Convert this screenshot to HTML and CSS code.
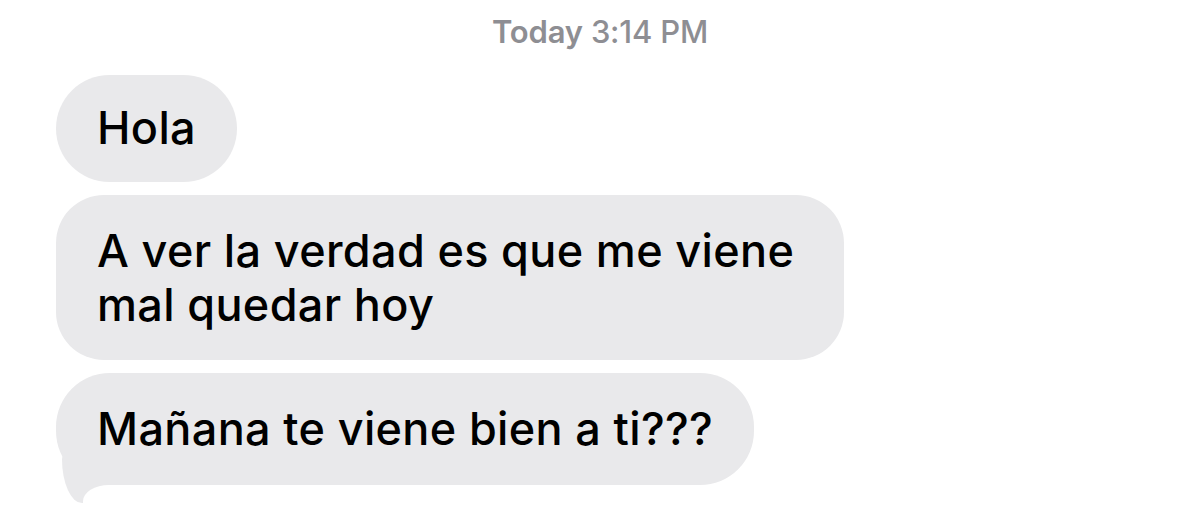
FILE: index.html
```html
<!DOCTYPE html>
<html>
	<head>
		<meta charset="utf-8">
		<title>Mensajes</title>
		<link rel="stylesheet" href="styles.css">
	</head>
	<body>
		<div class="chat">
			<div class="timestamp"><b>Today</b> 3:14 PM</div>
			<div class="messages">
				<div class="bubble">Hola</div>
				<div class="bubble double">A ver la verdad es que me viene<br>mal quedar hoy</div>
				<div class="bubble last">Mañana te viene bien a ti???</div>
			</div>
		</div>
	</body>
</html>
```

FILE: styles.css
```css
* {
	margin: 0;
	padding: 0;
}
body {
	background: #fff;
	font-family: "Inter", "Roboto", sans-serif;
}
.chat {
	padding-top: 14px;
}
.timestamp {
	text-align: center;
	font-size: 31px;
	line-height: 36px;
	color: #8e8e93;
	font-weight: 500;
	letter-spacing: -0.2px;
}
.timestamp b {
	font-weight: 600;
}
.messages {
	display: flex;
	flex-direction: column;
	align-items: flex-start;
	gap: 13px;
	padding: 25px 0 40px 56px;
}
.bubble {
	position: relative;
	background: #e9e9eb;
	color: #000;
	font-size: 45px;
	font-weight: 500;
	line-height: 54px;
	letter-spacing: 0.35px;
	padding: 26px 41px 27px;
	border-radius: 54px;
	white-space: nowrap;
}
.bubble.double {
	padding: 29px 50px 28px 41px;
	border-radius: 48px;
}
.bubble.last {
	padding: 29px 41px;
}
/* cola del último mensaje */
.bubble.last::before {
	content: "";
	position: absolute;
	left: 6px;
	bottom: -18px;
	width: 50px;
	height: 50px;
	background: #e9e9eb;
	border-top-left-radius: 6px;
	border-bottom-left-radius: 20px 44px;
}
.bubble.last::after {
	content: "";
	position: absolute;
	left: 27px;
	top: 100%;
	width: 40px;
	height: 22px;
	background: #fff;
	border-top-left-radius: 26px 16px;
}
```
